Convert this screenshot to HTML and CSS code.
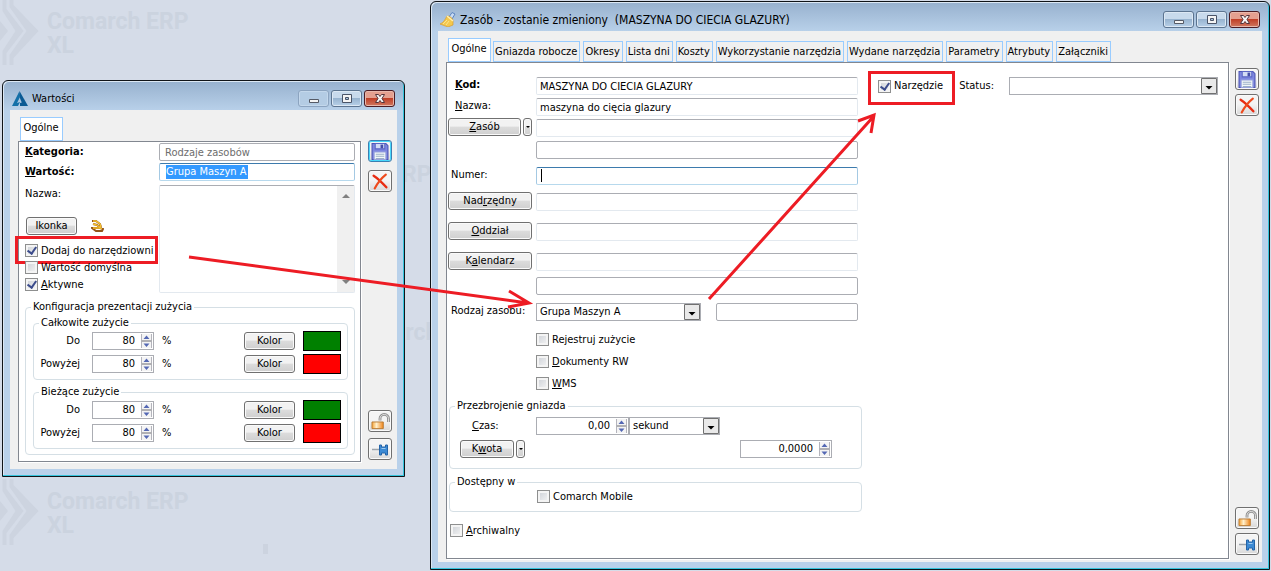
FILE: index.html
```html
<!DOCTYPE html>
<html lang="pl">
<head>
<meta charset="utf-8">
<title>Zasób - zostanie zmieniony</title>
<link rel="stylesheet" href="styles.css">
</head>
<body>
<svg width="0" height="0" class="defs" aria-hidden="true">
  <defs>
    <linearGradient id="gold" x1="0" x2="1"><stop offset="0" stop-color="#f7a234"/><stop offset=".4" stop-color="#fff0cc"/><stop offset="1" stop-color="#f08418"/></linearGradient>
    <symbol id="i-save" viewBox="0 0 16 16"><path d="M.5.5h13l2 2v13H.5z" fill="#7d86e0" stroke="#4c55b4"/><path d="M3.500.5h9v5h-9z" fill="#d3dcf4" stroke="#5c66c4"/><path d="M8.500 1.500h2.500v3.500H8.500z" fill="#444da8"/><path d="M2.500 8.500h11v7h-11z" fill="#f2f8f8" stroke="#98a4dc"/><path d="M4 10.500h8M4 12.500h8M4 14.500h8" stroke="#9aaec8"/></symbol>
    <symbol id="i-del" viewBox="0 0 16 16"><path d="M2 2.500C6 5 10 9 14 13.500" stroke="#e82c12" stroke-width="2.200" fill="none" stroke-linecap="round"/><path d="M13.500 1.500C9 5 6 9 3 14.500" stroke="#ee4a1c" stroke-width="2" fill="none" stroke-linecap="round"/></symbol>
    <symbol id="i-lock" viewBox="0 0 20 18"><path d="M10 8V6a4.500 4.500 0 0 1 9 0v3.500" fill="none" stroke="#8e8e8e" stroke-width="3"/><path d="M10 8V6a4.500 4.500 0 0 1 9 0v3.500" fill="none" stroke="#e2e2e2" stroke-width="1"/><path d="M1.500 9.500h12v7h-12z" fill="url(#gold)" stroke="#b87a34"/></symbol>
    <symbol id="i-pin" viewBox="0 0 20 16"><path d="M2 8h8" stroke="#9ca4ac" stroke-width="1.500"/><path d="M9.500 3.500h2v2h4v-2h2v10h-2v-2h-4v2h-2z" fill="#3c8ad4" stroke="#2464a8"/><path d="M11.500 7h4" stroke="#9ccaf0"/></symbol>
    <symbol id="i-min" viewBox="0 0 16 12"><path d="M3.500 6.500h9v3h-9z" fill="#f4f4f4" stroke="#555a66"/></symbol>
    <symbol id="i-max" viewBox="0 0 16 12"><path d="M3.500 1.500h9v8h-9z" fill="#f4f4f4" stroke="#4a5468"/><path d="M6.500 4.500h3v2h-3z" fill="#a8c4e0" stroke="#4a5468"/></symbol>
    <symbol id="i-close" viewBox="0 0 16 12"><path d="M3.500 1.500h3L8 3.500l1.500-2h3L10 5.500l2.500 4h-3L8 7.500l-1.500 2h-3L6 5.500z" fill="#f6f6f6" stroke="#54343a"/></symbol>
    <symbol id="i-spin" viewBox="0 0 11 14"><path d="M0 0h11v14H0z" fill="#f4f4f4"/><path d="M.5 0v14M10.500 0v14" stroke="#b4b4bc"/><path d="M0 7h11" stroke="#b0b0b4" stroke-width="2"/><path d="M2.500 5L5.500 1.500 8.500 5zM2.500 9.500L5.500 13 8.500 9.500z" fill="#5468b4"/></symbol>
    <symbol id="i-drop" viewBox="0 0 16 16"><path d="M.5.5h15v15H.5z" fill="#e9e9e9" stroke="#707070"/><path d="M4.500 8h7L8 11.500z" fill="#000"/></symbol>
    <symbol id="i-mark" viewBox="0 0 40 70"><path d="M2.500 0h4v10l17 22-17 22v12h-4V52l13-20L2.500 12zM9.500 0h4v6l25 26-25 27v7h-4V56l17-24L9.500 8zM0 22l8 10-8 10z"/></symbol>
  </defs>
</svg>
<main class="desktop">
  <div class="wallpaper" aria-hidden="true">
    <div class="mark mark-a"><svg><use href="#i-mark"/></svg><div class="words"><span>Comarch ERP</span><span>XL</span></div></div>
    <div class="mark mark-b"><svg><use href="#i-mark"/></svg><div class="words"><span>Comarch ERP</span><span>XL</span></div></div>
    <div class="mark mark-c"><div class="words"><span>Comarch ERP</span></div></div>
    <div class="mark mark-d"><div class="words"><span>Comarch ERP</span></div></div>
    <i class="speck"></i>
  </div>

  <section class="window values">
    <header class="titlebar">
      <svg class="app" viewBox="0 0 16 15"><path d="M7.500 0L16 15h-5L7 4.500z" fill="#0a5a94"/><path d="M7 1L0 15h6l2-4-3 1 3-6z" fill="#1470a8"/><path d="M8 12l4-1 1 4H8z" fill="#0a5a94"/></svg>
      <h1>Wartości</h1>
      <div class="controls"><button class="ctl faint" aria-label="Minimalizuj"><svg><use href="#i-min"/></svg></button><button class="ctl" aria-label="Maksymalizuj"><svg><use href="#i-max"/></svg></button><button class="ctl close" aria-label="Zamknij"><svg><use href="#i-close"/></svg></button></div>
    </header>
    <div class="client">
      <div class="body">
        <nav class="tabs"><button class="tab active">Ogólne</button></nav>
        <div class="panel">
          <div class="value-grid">
            <label class="strong" for="kat"><u>K</u>ategoria:</label><input id="kat" class="box muted" value="Rodzaje zasobów" readonly>
            <label class="strong" for="war"><u>W</u>artość:</label><div class="box focus pick"><input id="war" class="selected" size="11" value="Grupa Maszyn A"></div>
            <div class="side">
              <label class="name-label" for="naz">Nazwa:</label>
              <div class="icon-row"><button class="btn small">Ikonka</button><svg class="crane" viewBox="0 0 13 12"><path d="M1 1h4l4 3 1 3M2 4l4 1 5 4M1 8h8l3 1-1 2H5z" fill="none" stroke="#94551a" stroke-width="2"/><path d="M2 1h3l4 3 1 3M2 4l4 1 4 3M2 8h7l2 1" stroke="#f7c331" stroke-width="1.300" fill="none"/></svg></div>
              <label class="check marked"><input type="checkbox" checked>Dodaj do narzędziowni</label>
              <label class="check"><input type="checkbox">Wartość domyślna</label>
              <label class="check"><input type="checkbox" checked><span><u>A</u>ktywne</span></label>
            </div>
            <div class="memo"><textarea id="naz"></textarea><div class="scroll" aria-hidden="true"><svg viewBox="0 0 8 5"><path d="M0 5l4-4 4 4z"/></svg><svg viewBox="0 0 8 5"><path d="M0 0l4 4 4-4z"/></svg></div></div>
          </div>
          <fieldset class="group outer">
            <legend>Konfiguracja prezentacji zużycia</legend>
            <fieldset class="group wear">
              <legend>Całkowite zużycie</legend>
              <label for="c1">Do</label><span class="spin"><input id="c1" value="80"><svg><use href="#i-spin"/></svg></span><span>%</span><button class="btn">Kolor</button><i class="swatch green"></i>
              <label for="c2">Powyżej</label><span class="spin"><input id="c2" value="80"><svg><use href="#i-spin"/></svg></span><span>%</span><button class="btn">Kolor</button><i class="swatch red"></i>
            </fieldset>
            <fieldset class="group wear">
              <legend>Bieżące zużycie</legend>
              <label for="b1">Do</label><span class="spin"><input id="b1" value="80"><svg><use href="#i-spin"/></svg></span><span>%</span><button class="btn">Kolor</button><i class="swatch green"></i>
              <label for="b2">Powyżej</label><span class="spin"><input id="b2" value="80"><svg><use href="#i-spin"/></svg></span><span>%</span><button class="btn">Kolor</button><i class="swatch red"></i>
            </fieldset>
          </fieldset>
        </div>
      </div>
      <aside class="tools"><button class="tool hot" aria-label="Zapisz"><svg><use href="#i-save"/></svg></button><button class="tool" aria-label="Anuluj"><svg><use href="#i-del"/></svg></button><button class="tool push" aria-label="Blokada"><svg><use href="#i-lock"/></svg></button><button class="tool" aria-label="Przypnij"><svg><use href="#i-pin"/></svg></button></aside>
    </div>
  </section>

  <section class="window resource">
    <header class="titlebar">
      <svg class="app" viewBox="0 0 16 15"><path d="M9 5l3-4.500 3 1.500-3 5z" fill="#c8dcf4" stroke="#5c84c0"/><path d="M7 4c3 0 5 2 6 4v5l-5 2-8-3c3-1 5-4 7-8z" fill="#f4c84c" stroke="#d89c2c" stroke-width=".7"/><path d="M7 4l6 5" stroke="#fff0b0" stroke-width="1.500"/><path d="M3 12l4-4M6 13l3-4" stroke="#fbe48c"/></svg>
      <h1>Zasób - zostanie zmieniony&nbsp; (MASZYNA DO CIECIA GLAZURY)</h1>
      <div class="controls"><button class="ctl" aria-label="Minimalizuj"><svg><use href="#i-min"/></svg></button><button class="ctl" aria-label="Maksymalizuj"><svg><use href="#i-max"/></svg></button><button class="ctl close" aria-label="Zamknij"><svg><use href="#i-close"/></svg></button></div>
    </header>
    <div class="client">
      <div class="body">
        <nav class="tabs"><button class="tab active">Ogólne</button><button class="tab">Gniazda robocze</button><button class="tab">Okresy</button><button class="tab">Lista dni</button><button class="tab">Koszty</button><button class="tab">Wykorzystanie narzędzia</button><button class="tab">Wydane narzędzia</button><button class="tab">Parametry</button><button class="tab">Atrybuty</button><button class="tab">Załączniki</button></nav>
        <div class="panel">
          <div class="form">
            <div class="fields">
              <label class="strong in" for="kod"><u>K</u>od:</label><input id="kod" class="box soft" value="MASZYNA DO CIECIA GLAZURY">
              <label class="in" for="nzw"><u>N</u>azwa:</label><input id="nzw" class="box soft" value="maszyna do cięcia glazury">
              <div class="split"><button class="btn"><u>Z</u>asób</button><button class="btn more" aria-label="Więcej"></button></div><input class="box soft" aria-label="Zasób">
              <span></span><input class="box" aria-label="Nazwa zasobu">
              <label class="near" for="num">Numer:</label><div class="box focus caret"><input id="num"></div>
              <button class="btn">Nad<u>r</u>zędny</button><input class="box soft" aria-label="Nadrzędny">
              <button class="btn"><u>O</u>ddział</button><input class="box soft" aria-label="Oddział">
              <button class="btn">K<u>a</u>lendarz</button><input class="box soft" aria-label="Kalendarz">
              <span></span><input class="box" aria-label="Nazwa kalendarza">
              <label class="near" for="rodz">Rodzaj zasobu:</label><div class="kind"><span class="combo"><select id="rodz"><option>Grupa Maszyn A</option></select><svg><use href="#i-drop"/></svg></span><input class="box" aria-label="Opis rodzaju"></div>
            </div>
            <div class="options">
              <label class="check"><input type="checkbox">Rejestruj zużycie</label>
              <label class="check"><input type="checkbox"><span><u>D</u>okumenty RW</span></label>
              <label class="check"><input type="checkbox"><span><u>W</u>MS</span></label>
            </div>
            <fieldset class="group setup">
              <legend>Przezbrojenie gniazda</legend>
              <div class="time"><label for="czas"><u>C</u>zas:</label><span class="spin"><input id="czas" value="0,00"><svg><use href="#i-spin"/></svg></span><span class="combo"><select aria-label="Jednostka"><option>sekund</option></select><svg><use href="#i-drop"/></svg></span></div>
              <div class="amount"><div class="split"><button class="btn">K<u>w</u>ota</button><button class="btn more" aria-label="Więcej"></button></div><span class="spin"><input aria-label="Kwota" value="0,0000"><svg><use href="#i-spin"/></svg></span></div>
            </fieldset>
            <fieldset class="group avail"><legend>Dostępny w</legend><label class="check"><input type="checkbox">Comarch Mobile</label></fieldset>
            <label class="check archive"><input type="checkbox"><span><u>A</u>rchiwalny</span></label>
          </div>
          <div class="status">
            <label class="check marked"><input type="checkbox" checked>Narzędzie</label>
            <label for="stat">Status:</label><span class="combo"><select id="stat"><option></option></select><svg><use href="#i-drop"/></svg></span>
          </div>
        </div>
      </div>
      <aside class="tools"><button class="tool" aria-label="Zapisz"><svg><use href="#i-save"/></svg></button><button class="tool" aria-label="Anuluj"><svg><use href="#i-del"/></svg></button><button class="tool push" aria-label="Blokada"><svg><use href="#i-lock"/></svg></button><button class="tool" aria-label="Przypnij"><svg><use href="#i-pin"/></svg></button></aside>
    </div>
  </section>

  <svg class="arrows" width="900" height="320" fill="none" stroke="#ed1c24" stroke-width="3" aria-hidden="true"><path d="M189 257L528 303M509 291l20 12-21 4M709 299L874 116M858 121l16-6-3 18"/></svg>
</main>
</body>
</html>
```
FILE: styles.css
```css
* { box-sizing: border-box; }
body { margin: 0; background: #d5dce8; color: #000; font: 11px/14px "DejaVu Sans Condensed", "DejaVu Sans", sans-serif; }
button, input, select, textarea { font: inherit; color: inherit; margin: 0; padding: 0; border-radius: 0; }
h1 { margin: 0; font-size: 12px; font-weight: normal; white-space: nowrap; }
.defs { position: absolute; }
.desktop { position: relative; display: flex; align-items: flex-start; gap: 25px; min-height: 100vh; padding: 1px 1px 1px 2px; overflow: hidden; }

.wallpaper { position: absolute; inset: 0; color: #cbd3df; fill: #cdd4e0; font: bold 23px/24px Roboto, sans-serif; }
.mark { position: absolute; display: flex; gap: 7px; white-space: nowrap; }
.mark svg { width: 40px; height: 70px; }
.words { display: flex; flex-direction: column; padding-top: 11px; }
.mark-a { left: 0; top: -1px; }
.mark-b { left: 0; top: 479px; }
.mark-c { left: 290px; top: 152px; }
.mark-d { left: 345px; top: 310px; }
.speck { position: absolute; left: 263px; top: 544px; width: 5px; height: 10px; background: #ccd3df; }

.window { position: relative; display: flex; flex-direction: column; border: 1px solid #101418; border-radius: 6px 6px 0 0; background: linear-gradient(#97b1ce, #b9d1ea 30px); box-shadow: inset -1px -1px #35c4dc, inset 1px 1px #dce8f4; padding: 0 7px 7px; }
.values { flex: 0 1 403px; margin-top: 79px; }
.resource { flex: 1; align-self: stretch; }
.titlebar { display: flex; align-items: center; height: 29px; padding: 6px 0 0 2px; }
.app { width: 16px; height: 15px; margin-right: 4px; }
.values h1 { font-size: 11px; }
.controls { display: flex; gap: 2px; margin: 0 2px 0 auto; }
.ctl { display: grid; place-items: center; width: 31px; height: 17px; border: 1px solid #5c7490; border-radius: 3px; background: linear-gradient(#c8daec 45%, #98b4d0 50%, #b8d0e8); box-shadow: inset 0 0 0 1px #dce8f4; }
.ctl svg { width: 16px; height: 12px; }
.faint { border-color: #8ca4c0; background: #b4cce4; box-shadow: inset 0 0 0 1px #c4d8ec; }
.close { border-color: #4c1c24; background: linear-gradient(#e4a090 45%, #c04028 50%, #d07860); box-shadow: inset 0 0 0 1px #e8b8ac; }
.client { flex: 1; display: flex; background: #f0f0f0; padding: 7px 5px 7px 8px; }
.resource .client { padding: 7px 3px 3px 8px; }
.body { flex: 1; min-width: 0; display: flex; flex-direction: column; }
.tabs { display: flex; align-items: flex-end; gap: 3px; padding-left: 2px; }
.tab { height: 21px; padding: 0 2px 0 1px; border: 1px solid #99ccff; background: #f0f0f0; white-space: nowrap; }
.tab.active { height: 24px; padding-bottom: 3px; background: #fff; min-width: 43px; margin-right: -1px; }
.panel { flex: 1; border: 1px solid #828790; background: #fff; box-shadow: 1px 1px #fff; }
.values .panel { padding: 1px 5px 6px 6px; }
.tools { display: flex; flex-direction: column; gap: 6px; width: 31px; padding: 23px 0 2px 7px; }
.resource .tools { gap: 4px; width: 30px; padding: 30px 0 4px 6px; }
.tool { display: grid; place-items: center; width: 24px; height: 22px; border: 1px solid #707070; border-radius: 3px; background: linear-gradient(#f4f4f4 45%, #d8d8d8); box-shadow: inset 0 0 0 1px #fafafa; }
.values .tool:nth-child(2) { margin-top: 2px; }
.tool svg { width: 20px; height: 17px; }
.tool.hot { border-color: #3c7fb1; box-shadow: inset 0 0 0 1px #48d8fb; }
.tool.push { margin-top: auto; }

.strong { font-weight: bold; }
.box { height: 18px; width: 100%; border: 1px solid #abadb3; border-radius: 2px; background: #fff; padding: 0 3px; outline: 0; }
.soft { border-color: #abadb3 #e3e9ef #e3e9ef; }
.focus { border-color: #3d7bad #a4c9e3 #b7d9ed; }
.muted { color: #6d6d6d; padding: 0 5px; }
.pick { padding: 1px 6px; }
.pick input { display: block; width: 82px; height: 14px; border: 0; outline: 0; background: #3399ff; color: #fff; }
.caret { display: flex; padding: 0 4px; }
.caret::before { content: ""; display: block; width: 1px; height: 13px; margin-top: 1px; background: #000; }
.caret input { flex: 1; border: 0; outline: 0; background: none; }
.btn { height: 18px; border: 1px solid #707070; border-radius: 3px; background: linear-gradient(#f2f2f2 45%, #dcdcdc 50%, #cfcfcf); box-shadow: inset 0 0 0 1px #fafafa; white-space: nowrap; }
.check { position: relative; display: flex; align-items: center; gap: 3px; width: max-content; height: 13px; }
.check input { appearance: none; width: 13px; height: 13px; border: 1px solid #8e8f8f; background: linear-gradient(135deg, #cbcfd5, #f6f6f6); box-shadow: inset 0 0 0 2px #f4f4f4; display: grid; place-items: center; }
.check input:checked::before { content: ""; width: 4px; height: 7px; margin-top: -2px; border: solid #3c4c8c; border-width: 0 2px 2px 0; transform: rotate(35deg); }
.marked::after { content: ""; position: absolute; inset: -8px -5px -7px -10px; border: 3px solid #ed1c24; }

.value-grid { display: grid; grid-template-columns: 134px 1fr; row-gap: 2px; }
.value-grid .strong { padding-top: 2px; }
.side { display: flex; flex-direction: column; padding-top: 4px; gap: 4px; }
.name-label { margin-bottom: 12px; }
.icon-row { display: flex; align-items: center; gap: 14px; margin-bottom: 5px; padding-left: 1px; }
.small { width: 51px; }
.crane { width: 13px; height: 12px; }
.memo { display: flex; height: 108px; margin-top: 2px; border: 1px solid #e3e9ef; border-top-color: #abadb3; border-radius: 2px; }
.memo textarea { flex: 1; min-width: 0; border: 0; outline: 0; resize: none; background: none; }
.scroll { display: flex; flex-direction: column; justify-content: space-between; align-items: center; width: 17px; padding: 7px 0; background: #f0f0f0; fill: #808080; }
.scroll svg { width: 8px; height: 5px; }
.group { min-width: 0; margin: 0; padding: 0; border: 1px solid #d5dfe5; border-radius: 4px; }
.group legend { margin-left: 5px; padding: 0 2px; height: 14px; }
.outer { margin-top: 7px; padding: 2px 6px 5px 7px; display: grid; gap: 5px; }
.outer > legend { margin-left: -2px; }
.wear { display: grid; grid-template-columns: 50px 62px 1fr 51px 38px; gap: 3px 8px; align-items: center; padding: 1px 6px 5px 0; }
.wear label { text-align: right; padding-right: 4px; }
.spin { display: flex; align-items: center; height: 18px; border: 1px solid #abadb3; background: #fff; padding-right: 1px; }
.spin input { flex: 1; min-width: 0; border: 0; outline: 0; background: none; text-align: right; padding-right: 6px; }
.spin svg { width: 11px; height: 14px; }
.swatch { height: 20px; border: 1px solid #000; }
.green { background: #008000; }
.red { background: #f00; }

.resource .panel { display: flex; align-items: flex-start; gap: 7px; padding: 14px 10px 10px 1px; }
.form { flex: 0 1 414px; }
.fields { display: grid; grid-template-columns: 84px 322px; column-gap: 4px; grid-template-rows: 21px 21px 22px 26px 26px 30px 30px 24px 26px 18px; align-items: start; }
.fields label { padding-top: 1px; white-space: nowrap; }
.fields .btn { margin-top: -1px; }
.fields .in { padding-left: 7px; }
.fields .near { padding-left: 3px; }
.split { display: flex; gap: 2px; }
.split .btn { flex: 1; }
.split .more { flex: 0 0 9px; display: grid; place-items: center; }
.more::before { content: ""; border: 2px solid transparent; border-top: 2px solid #000; border-bottom: 0; }
.kind { display: grid; grid-template-columns: 165px 142px; justify-content: space-between; }
.combo { position: relative; display: flex; height: 18px; border: 1px solid #abadb3; background: #fff; }
.combo select { flex: 1; appearance: none; border: 0; outline: 0; background: none; padding-left: 3px; }
.combo svg { position: absolute; right: 0; top: 0; width: 16px; height: 16px; pointer-events: none; }
.options { display: grid; gap: 9px; padding: 12px 0 9px 88px; }
.setup { margin-left: 1px; padding: 4px 0 10px; }
.time { display: flex; gap: 0; align-items: center; padding-left: 22px; }
.time label { width: 64px; }
.time .spin { width: 93px; }
.time .combo { width: 91px; }
.amount { display: flex; justify-content: space-between; margin-top: 5px; padding: 0 29px 0 10px; }
.amount .split { width: 65px; }
.amount .spin { width: 92px; }
.avail { margin: 6px 0 0 1px; padding: 1px 0 8px 87px; }
.avail legend { margin-left: -82px; }
.archive { margin: 12px 0 0 2px; }
.status { flex: 1; display: flex; align-items: center; padding-left: 9px; }
.status .check { margin-right: 16px; }
.status .marked::after { inset: -9px -12px -12px -10px; }
.status .combo { flex: 1; margin-left: 15px; }
.arrows { position: absolute; left: 0; top: 0; pointer-events: none; }
```
